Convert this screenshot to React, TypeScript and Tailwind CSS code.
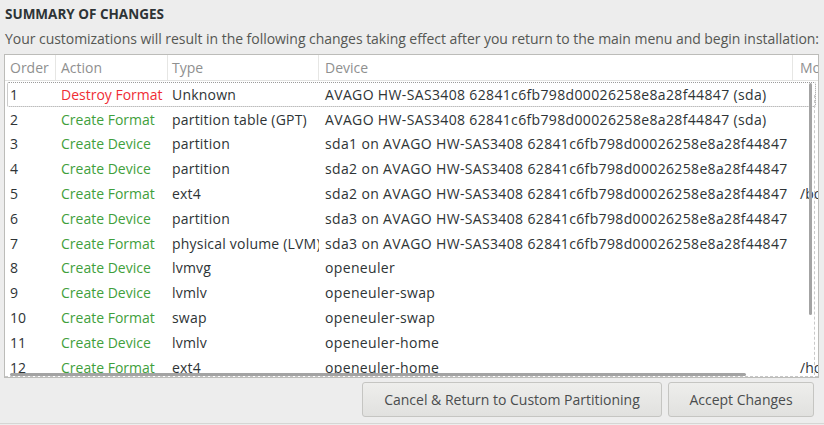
const rows: [string, string, string, string, string][] = [
  ['1', 'Destroy Format', 'Unknown', 'AVAGO HW-SAS3408 62841c6fb798d00026258e8a28f44847 (sda)', ''],
  ['2', 'Create Format', 'partition table (GPT)', 'AVAGO HW-SAS3408 62841c6fb798d00026258e8a28f44847 (sda)', ''],
  ['3', 'Create Device', 'partition', 'sda1 on AVAGO HW-SAS3408 62841c6fb798d00026258e8a28f44847', ''],
  ['4', 'Create Device', 'partition', 'sda2 on AVAGO HW-SAS3408 62841c6fb798d00026258e8a28f44847', ''],
  ['5', 'Create Format', 'ext4', 'sda2 on AVAGO HW-SAS3408 62841c6fb798d00026258e8a28f44847', '/boot'],
  ['6', 'Create Device', 'partition', 'sda3 on AVAGO HW-SAS3408 62841c6fb798d00026258e8a28f44847', ''],
  ['7', 'Create Format', 'physical volume (LVM)', 'sda3 on AVAGO HW-SAS3408 62841c6fb798d00026258e8a28f44847', ''],
  ['8', 'Create Device', 'lvmvg', 'openeuler', ''],
  ['9', 'Create Device', 'lvmlv', 'openeuler-swap', ''],
  ['10', 'Create Format', 'swap', 'openeuler-swap', ''],
  ['11', 'Create Device', 'lvmlv', 'openeuler-home', ''],
  ['12', 'Create Format', 'ext4', 'openeuler-home', '/home'],
];

// column widths: Order | Action | Type | Device | Mount Point
const cols = 'grid grid-cols-[51px_112px_151px_474px_80px]';

export default function App() {
  return (
    <div className="w-[824px] h-[425px] overflow-hidden bg-[#ededed] text-[#2e3436] font-['Open_Sans',sans-serif] flex flex-col">
      <h2 className="pl-[5px] pt-[4px] text-[13.5px] leading-[20px] font-bold">SUMMARY OF CHANGES</h2>
      <p className="pl-[5px] mt-[5px] text-[14px] leading-[20px] text-[#555753] whitespace-nowrap tracking-[-0.04px]">
        Your customizations will result in the following changes taking effect after you return to the main menu and begin installation:
      </p>

      <div className="relative ml-[4px] mt-[5px] w-[815px] h-[324px] bg-white border border-[#bcbcb9] overflow-hidden">
        <div className={`${cols} h-[26px] border-b border-[#e2e2e0] text-[14px] text-[#8f9090] whitespace-nowrap`}>
          <div className="pl-[5px] flex items-center overflow-hidden border-r border-[#e6e6e4]">Order</div>
          <div className="pl-[5px] flex items-center overflow-hidden border-r border-[#e6e6e4]">Action</div>
          <div className="pl-[4px] flex items-center overflow-hidden border-r border-[#e6e6e4]">Type</div>
          <div className="pl-[6px] flex items-center overflow-hidden border-r border-[#e6e6e4]">Device</div>
          <div className="pl-[7px] flex items-center overflow-hidden">Mount Point</div>
        </div>

        <div className="pt-[1px]">
          {rows.map((r, i) => (
            <div key={r[0]} className={`relative ${cols} h-[24.8px] text-[14px] items-center whitespace-nowrap`}>
              {i === 0 && (
                <div className="absolute left-[2px] right-[2px] top-0 bottom-0 border border-dotted border-[#9a9a9a] rounded-[2px]" />
              )}
              <div className="pl-[5px] overflow-hidden">{r[0]}</div>
              <div className={`pl-[5px] overflow-hidden ${r[1].startsWith('Destroy') ? 'text-[#ef2d35]' : 'text-[#3fa03c]'}`}>{r[1]}</div>
              <div className="pl-[4px] overflow-hidden tracking-[0.2px]">{r[2]}</div>
              <div className="pl-[6px] overflow-hidden tracking-[0.35px]">{r[3]}</div>
              <div className="pl-[7px] overflow-hidden">{r[4]}</div>
            </div>
          ))}
        </div>

        {/* overlay scrollbars */}
        <div className="absolute right-[6px] top-[28px] w-[3px] h-[232px] rounded-full bg-[#a3a3a3]" />
        <div className="absolute right-[3px] top-[40px] bottom-[2px] border-r border-dashed border-[#cacaca]" />
        <div className="absolute left-[5px] bottom-[1px] w-[736px] h-[3px] rounded-full bg-[#a3a3a3]" />
        <div className="absolute left-0 right-0 bottom-0 border-b border-dashed border-[#c8c8c8]" />
      </div>

      <div className="flex justify-end gap-[6px] pr-[10px] mt-[4px]">
        <button className="w-[300px] h-[35px] rounded-[3px] border border-[#c5c5c2] bg-gradient-to-b from-[#eeeeec] to-[#e1e1df] text-[14px] text-[#4a4d4e]">
          Cancel &amp; Return to Custom Partitioning
        </button>
        <button className="w-[146px] h-[35px] rounded-[3px] border border-[#c5c5c2] bg-gradient-to-b from-[#eeeeec] to-[#e1e1df] text-[14px] text-[#4a4d4e]">
          Accept Changes
        </button>
      </div>
      <div className="mt-auto h-[2px] border-t border-[#d6d6d4]" />
    </div>
  );
}
